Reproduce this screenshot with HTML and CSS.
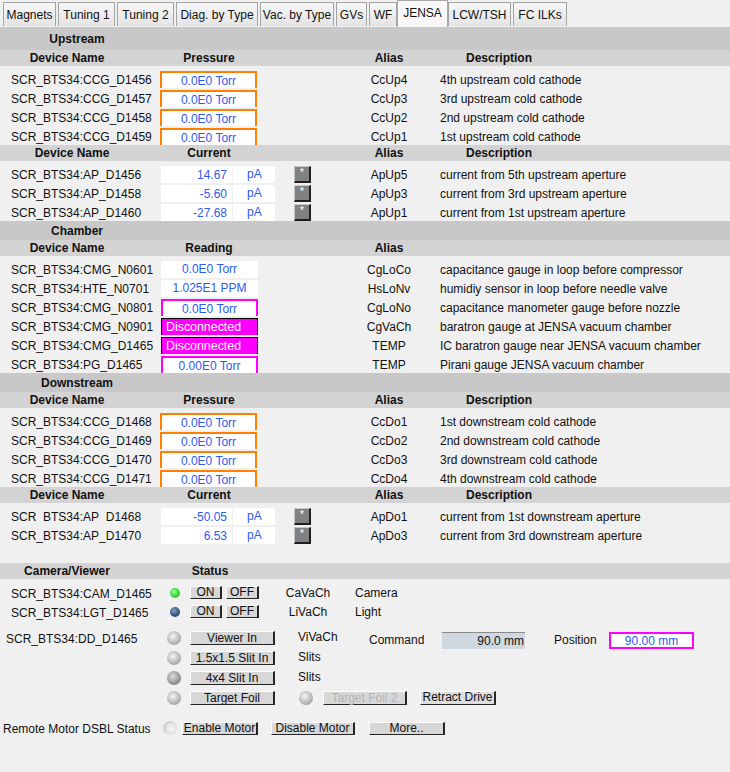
FILE: index.html
```html
<!DOCTYPE html>
<html>
<head>
<meta charset="utf-8">
<link rel="stylesheet" href="styles.css">
</head>
<body>
<div class="tabs">
  <div class="tab">Magnets</div>
  <div class="tab">Tuning 1</div>
  <div class="tab">Tuning 2</div>
  <div class="tab">Diag. by Type</div>
  <div class="tab">Vac. by Type</div>
  <div class="tab">GVs</div>
  <div class="tab">WF</div>
  <div class="tab active">JENSA</div>
  <div class="tab">LCW/TSH</div>
  <div class="tab">FC ILKs</div>
</div>

<div class="sec up"><span class="t">Upstream</span></div>
<div class="ch"><span class="dn">Device Name</span><span class="mid">Pressure</span><span class="al">Alias</span><span class="ds">Description</span></div>
<div class="rows">
  <div class="row"><span class="nm">SCR_BTS34:CCG_D1456</span><span class="pbox">0.0E0 Torr</span><span class="al">CcUp4</span><span class="ds">4th upstream cold cathode</span></div>
  <div class="row"><span class="nm">SCR_BTS34:CCG_D1457</span><span class="pbox">0.0E0 Torr</span><span class="al">CcUp3</span><span class="ds">3rd upstream cold cathode</span></div>
  <div class="row"><span class="nm">SCR_BTS34:CCG_D1458</span><span class="pbox">0.0E0 Torr</span><span class="al">CcUp2</span><span class="ds">2nd upstream cold cathode</span></div>
  <div class="row"><span class="nm">SCR_BTS34:CCG_D1459</span><span class="pbox">0.0E0 Torr</span><span class="al">CcUp1</span><span class="ds">1st upstream cold cathode</span></div>
</div>
<div class="ch"><span class="dn dn2">Device Name</span><span class="mid">Current</span><span class="al">Alias</span><span class="ds">Description</span></div>
<div class="rows">
  <div class="row"><span class="nm">SCR_BTS34:AP_D1456</span><span class="cur"><span class="val">14.67</span><span class="unit">pA</span><span class="star">*</span></span><span class="al">ApUp5</span><span class="ds">current from 5th upstream aperture</span></div>
  <div class="row"><span class="nm">SCR_BTS34:AP_D1458</span><span class="cur"><span class="val">-5.60</span><span class="unit">pA</span><span class="star">*</span></span><span class="al">ApUp3</span><span class="ds">current from 3rd upstream aperture</span></div>
  <div class="row"><span class="nm">SCR_BTS34:AP_D1460</span><span class="cur"><span class="val">-27.68</span><span class="unit">pA</span><span class="star">*</span></span><span class="al">ApUp1</span><span class="ds">current from 1st upstream aperture</span></div>
</div>

<div class="sec"><span class="t">Chamber</span></div>
<div class="ch"><span class="dn">Device Name</span><span class="mid">Reading</span><span class="al">Alias</span></div>
<div class="rows">
  <div class="row"><span class="nm">SCR_BTS34:CMG_N0601</span><span class="rbox">0.0E0 Torr</span><span class="al">CgLoCo</span><span class="ds">capacitance gauge in loop before compressor</span></div>
  <div class="row"><span class="nm">SCR_BTS34:HTE_N0701</span><span class="rbox">1.025E1 PPM</span><span class="al">HsLoNv</span><span class="ds">humidiy sensor in loop before needle valve</span></div>
  <div class="row"><span class="nm">SCR_BTS34:CMG_N0801</span><span class="rbox mag">0.0E0 Torr</span><span class="al">CgLoNo</span><span class="ds">capacitance manometer gauge before nozzle</span></div>
  <div class="row"><span class="nm">SCR_BTS34:CMG_N0901</span><span class="rbox dis">Disconnected</span><span class="al">CgVaCh</span><span class="ds">baratron gauge at JENSA vacuum chamber</span></div>
  <div class="row"><span class="nm">SCR_BTS34:CMG_D1465</span><span class="rbox dis">Disconnected</span><span class="al">TEMP</span><span class="ds">IC baratron gauge near JENSA vacuum chamber</span></div>
  <div class="row"><span class="nm">SCR_BTS34:PG_D1465</span><span class="rbox mag">0.00E0 Torr</span><span class="al">TEMP</span><span class="ds">Pirani gauge JENSA vacuum chamber</span></div>
</div>

<div class="sec"><span class="t">Downstream</span></div>
<div class="ch"><span class="dn">Device Name</span><span class="mid">Pressure</span><span class="al">Alias</span><span class="ds">Description</span></div>
<div class="rows">
  <div class="row"><span class="nm">SCR_BTS34:CCG_D1468</span><span class="pbox">0.0E0 Torr</span><span class="al">CcDo1</span><span class="ds">1st downstream cold cathode</span></div>
  <div class="row"><span class="nm">SCR_BTS34:CCG_D1469</span><span class="pbox">0.0E0 Torr</span><span class="al">CcDo2</span><span class="ds">2nd downstream cold cathode</span></div>
  <div class="row"><span class="nm">SCR_BTS34:CCG_D1470</span><span class="pbox">0.0E0 Torr</span><span class="al">CcDo3</span><span class="ds">3rd downstream cold cathode</span></div>
  <div class="row"><span class="nm">SCR_BTS34:CCG_D1471</span><span class="pbox">0.0E0 Torr</span><span class="al">CcDo4</span><span class="ds">4th downstream cold cathode</span></div>
</div>
<div class="ch"><span class="dn">Device Name</span><span class="mid">Current</span><span class="al">Alias</span><span class="ds">Description</span></div>
<div class="rows">
  <div class="row"><span class="nm"><span class="clipu">SCR_BTS34:AP_D1468</span></span><span class="cur"><span class="val">-50.05</span><span class="unit">pA</span><span class="star">*</span></span><span class="al">ApDo1</span><span class="ds">current from 1st downstream aperture</span></div>
  <div class="row"><span class="nm">SCR_BTS34:AP_D1470</span><span class="cur"><span class="val">6.53</span><span class="unit">pA</span><span class="star">*</span></span><span class="al">ApDo3</span><span class="ds">current from 3rd downstream aperture</span></div>
</div>

<div class="camhead"><span class="dn">Camera/Viewer</span><span class="st">Status</span></div>
<div class="camrows">
  <div class="camrow"><span class="nm">SCR_BTS34:CAM_D1465</span><span class="ledsm green"></span><span class="btn on">ON</span><span class="btn off">OFF</span><span class="cal">CaVaCh</span><span class="cdesc">Camera</span></div>
  <div class="camrow"><span class="nm">SCR_BTS34:LGT_D1465</span><span class="ledsm blue"></span><span class="btn on">ON</span><span class="btn off">OFF</span><span class="cal">LiVaCh</span><span class="cdesc">Light</span></div>
</div>

<div class="dd">
  <div class="ddrow">
    <span class="ddlabel">SCR_BTS34:DD_D1465</span><span class="led"></span><span class="btn big">Viewer In</span><span class="ddal">ViVaCh</span><span class="cmdlbl">Command</span><span class="cmdbox">90.0 mm</span><span class="poslbl">Position</span><span class="posbox">90.00 mm</span>
  </div>
  <div class="ddrow">
    <span class="ddlabel"></span><span class="led"></span><span class="btn big">1.5x1.5 Slit In</span><span class="ddal">Slits</span>
  </div>
  <div class="ddrow">
    <span class="ddlabel"></span><span class="led dark"></span><span class="btn big">4x4 Slit In</span><span class="ddal">Slits</span>
  </div>
  <div class="ddrow">
    <span class="ddlabel"></span><span class="led"></span><span class="btn big">Target Foil</span><span class="led led2"></span><span class="btn big disabled">Target Foil 2</span><span class="btn retract">Retract Drive</span>
  </div>
</div>

<div class="remote">
  <span class="rlabel">Remote Motor DSBL Status</span><span class="led faded"></span><span class="btn enable">Enable Motor</span><span class="btn disable">Disable Motor</span><span class="btn more">More..</span>
</div>
</body>
</html>
```
FILE: styles.css
```css
html, body {
  margin: 0;
  padding: 0;
}
body {
  width: 730px;
  height: 772px;
  overflow: hidden;
  background: #f0f0f0;
  font-family: "Liberation Sans", Arial, sans-serif;
  font-size: 12px;
  color: #111;
}

/* ---------- tabs ---------- */
.tabs {
  display: flex;
  align-items: flex-end;
  height: 27px;
  padding-left: 3px;
  gap: 2px;
  box-sizing: border-box;
}
.tab {
  height: 24px;
  margin-bottom: 1px;
  box-sizing: border-box;
  border: 1px solid #a3a3a3;
  border-bottom: none;
  background: linear-gradient(#f6f6f6, #e4e4e4);
  line-height: 24px;
  text-align: center;
  white-space: nowrap;
}
.tab:nth-child(1) { width: 53px; }
.tab:nth-child(2) { width: 57px; }
.tab:nth-child(3) { width: 57px; }
.tab:nth-child(4) { width: 82px; }
.tab:nth-child(5) { width: 74px; }
.tab:nth-child(6) { width: 31px; }
.tab:nth-child(7) { width: 28px; }
.tab:nth-child(8) { width: 51px; }
.tab:nth-child(9) { width: 63px; }
.tab:nth-child(10) { width: 54px; }
.tab.active {
  height: 27px;
  margin: 0 -2px 0 -2px;
  background: #f8f8f8;
  line-height: 25px;
  border-color: #a8a8a8;
}

/* ---------- section titles / column headers ---------- */
.sec {
  background: #c8c8c8;
  height: 19px;
  line-height: 20px;
  font-weight: bold;
}
.sec.up {
  height: 23px;
  line-height: 24px;
}
.sec .t {
  display: block;
  width: 154px;
  text-align: center;
}

.ch, .row {
  display: grid;
  grid-template-columns: 160px 98px 92px 78px 1fr;
}
.ch {
  background: #d3d3d3;
  height: 16px;
  line-height: 17px;
  font-weight: bold;
}
.ch .dn { width: 134px; text-align: center; }
.ch .dn2 { width: 144px; }
.ch .mid { text-align: center; }
.ch .al { grid-column: 4; text-align: center; }
.ch .ds { padding-left: 38px; }

.rows { padding-top: 3px; }
.row {
  height: 19px;
  padding-top: 2px;
  box-sizing: border-box;
  line-height: 18px;
  overflow: hidden;
  white-space: nowrap;
}
.row .nm { padding-left: 11px; }
.row .al { grid-column: 4; text-align: center; }
.row .ds { padding-left: 12px; }

.clipu {
  display: block;
  height: 15px;
  overflow: hidden;
}

/* value widgets */
.pbox {
  width: 97px;
  height: 17px;
  box-sizing: border-box;
  border: 2px solid #ff8000;
  border-bottom: 0;
  background: #fff;
  color: #2b5cf0;
  text-align: center;
  line-height: 16px;
}
.rbox {
  margin-left: 1px;
  width: 97px;
  height: 17px;
  box-sizing: border-box;
  background: #fff;
  color: #2b5cf0;
  text-align: center;
  line-height: 17px;
}
.rbox.mag {
  border: 2px solid #ff00ff;
  border-bottom: 0;
  line-height: 16px;
}
.rbox.dis {
  background: #ff00ff;
  border: 1px solid #000;
  border-bottom: 0;
  color: #fff;
  text-align: left;
  padding-left: 4px;
  line-height: 17px;
  font-size: 12.4px;
}

.cur {
  grid-column: 2 / 4;
  display: flex;
}
.val {
  margin-left: 1px;
  width: 71px;
  height: 17px;
  box-sizing: border-box;
  padding-right: 5px;
  background: #fff;
  color: #2b5cf0;
  text-align: right;
  line-height: 18px;
}
.unit {
  margin-left: 1px;
  width: 42px;
  height: 17px;
  box-sizing: border-box;
  padding-left: 14px;
  background: #fff;
  color: #2b5cf0;
  line-height: 17px;
}
.star {
  margin-left: 19px;
  width: 17px;
  height: 17px;
  box-sizing: border-box;
  background: #808080;
  border-top: 1px solid #c8c8c8;
  border-left: 1px solid #c8c8c8;
  border-right: 2px solid #1e1e1e;
  border-bottom: 2px solid #1e1e1e;
  color: #fff;
  font-size: 11px;
  line-height: 11px;
  text-align: center;
}

/* ---------- camera / viewer ---------- */
.camhead {
  display: flex;
  margin-top: 19px;
  background: #d3d3d3;
  height: 16px;
  line-height: 17px;
  font-weight: bold;
}
.camhead .dn { width: 134px; text-align: center; }
.camhead .st { margin-left: 26px; width: 100px; text-align: center; }

.camrows { padding-top: 4px; }
.camrow {
  display: flex;
  align-items: center;
  height: 19px;
  white-space: nowrap;
}
.camrow .nm {
  width: 160px;
  box-sizing: border-box;
  padding-left: 11px;
  padding-top: 2px;
}
.ledsm {
  width: 10px;
  height: 10px;
  border-radius: 50%;
  margin-left: 10px;
}
.ledsm.green {
  background: radial-gradient(circle at 40% 38%, #a8ffa8 0, #3ee03e 45%, #1fb51f 100%);
}
.ledsm.blue {
  background: radial-gradient(circle at 40% 35%, #8aa3c4 0, #3c5a82 50%, #1f3657 100%);
}

.btn {
  display: block;
  box-sizing: border-box;
  height: 14px;
  padding-top: 1px;
  border-top: 1px solid #fdfdfd;
  border-left: 1px solid #fdfdfd;
  border-right: 2px solid #262626;
  border-bottom: 1px solid #262626;
  background: #d7d7d7;
  color: #111;
  text-align: center;
  line-height: 11px;
  white-space: nowrap;
}
.btn.on { margin-left: 10px; width: 32px; height: 13px; padding-top: 0; }
.btn.off { margin-left: 4px; width: 33px; height: 13px; padding-top: 0; }
.cal { margin-left: 26px; width: 46px; text-align: center; padding-top: 1px; }
.cdesc { margin-left: 24px; padding-top: 1px; }

/* ---------- DD block ---------- */
.dd { margin-top: 7px; }
.ddrow {
  display: flex;
  align-items: center;
  height: 20px;
  white-space: nowrap;
}
.ddlabel {
  width: 160px;
  box-sizing: border-box;
  padding-left: 6px;
  padding-top: 2px;
}
.led {
  width: 14px;
  height: 14px;
  border-radius: 50%;
  margin-left: 7px;
  background: radial-gradient(circle at 42% 38%, #f4f4f4 0, #c4c4c4 45%, #8a8a8a 100%);
}
.led.dark {
  background: radial-gradient(circle at 42% 38%, #dcdcdc 0, #a6a6a6 45%, #5e5e5e 100%);
}
.led.led2 { margin-left: 24px; }
.led.faded {
  margin-left: 0;
  background: radial-gradient(circle at 60% 55%, #f8f8f8 0, #e2e2e2 45%, #b4b4b4 100%);
}
.btn.big { margin-left: 9px; width: 85px; }
.btn.disabled { margin-left: 10px; width: 84px; color: #b4b4b4; }
.btn.retract { margin-left: 13px; width: 76px; padding-top: 0; background: #dedede; }
.ddal { margin-left: 23px; width: 71px; margin-top: -3px; }
.cmdlbl { width: 73px; margin-top: 4px; }
.cmdbox {
  width: 83px;
  height: 17px;
  margin-top: 4px;
  box-sizing: border-box;
  border-top: 1px solid #8a8a8a;
  background: #cfd8e0;
  text-align: right;
  padding-right: 1px;
  line-height: 16px;
}
.poslbl { margin-left: 29px; width: 55px; margin-top: 4px; }
.posbox {
  width: 85px;
  height: 17px;
  margin-top: 4px;
  box-sizing: border-box;
  border: 2px solid #ff00ff;
  background: #fff;
  color: #2b5cf0;
  text-align: center;
  line-height: 14px;
}

/* ---------- remote row ---------- */
.remote {
  display: flex;
  align-items: center;
  height: 20px;
  margin-top: 10px;
  white-space: nowrap;
}
.rlabel {
  width: 163px;
  box-sizing: border-box;
  padding-left: 3px;
  padding-top: 1px;
}
.btn.enable { margin-left: 5px; width: 76px; height: 13px; padding-top: 0; }
.btn.disable { margin-left: 13px; width: 84px; height: 13px; padding-top: 0; }
.btn.more { margin-left: 14px; width: 76px; height: 13px; padding-top: 0; }
```
